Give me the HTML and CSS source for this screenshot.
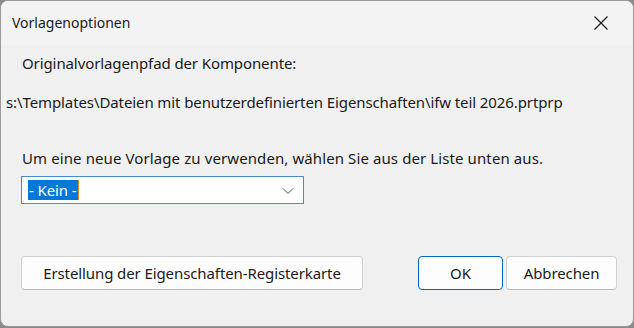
FILE: index.html
```html
<!DOCTYPE html>
<html>
<head>
    <meta charset="utf-8">
    <link rel="stylesheet" href="styles.css">
</head>
<body>
    <div class="dialog">
        <div class="title-bar">
            <span class="title">Vorlagenoptionen</span>
            <button class="close" aria-label="Schließen">
                <svg width="16" height="16" viewBox="0 0 16 16">
                    <path d="M1.5 1.5 L14.5 14.5 M14.5 1.5 L1.5 14.5" stroke="#1a1a1a" stroke-width="1.2" fill="none"/>
                </svg>
            </button>
        </div>
        <div class="content">
            <div class="label first">Originalvorlagenpfad der Komponente:</div>
            <div class="path">s:\Templates\Dateien mit benutzerdefinierten Eigenschaften\ifw teil 2026.prtprp</div>
            <div class="label choose">Um eine neue Vorlage zu verwenden, wählen Sie aus der Liste unten aus.</div>
            <div class="combo">
                <span class="selected">- Kein -</span><span class="caret"></span>
                <svg class="arrow" width="12" height="8" viewBox="0 0 12 8">
                    <path d="M1 1.5 L6 6.5 L11 1.5" stroke="#555" stroke-width="1" fill="none"/>
                </svg>
            </div>
            <div class="buttons">
                <button class="btn wide">Erstellung der Eigenschaften-Registerkarte</button>
                <div class="spacer"></div>
                <button class="btn ok">OK</button>
                <button class="btn cancel">Abbrechen</button>
            </div>
        </div>
    </div>
</body>
</html>
```

FILE: styles.css
```css
:root {
    --radius: 4px;
}

html, body {
    margin: 0;
    height: 100%;
}
body {
    background-color: #8a8a8a;
    font-family: "Noto Sans", "Open Sans", sans-serif;
    color: #1a1a1a;
}

.dialog {
    width: 632px;
    height: 325px;
    border: 1px solid #9a9a9a;
    border-radius: 8px;
    overflow: hidden;
    background-color: #f0f0f0;
    display: flex;
    flex-direction: column;
}

.title-bar {
    height: 44px;
    background-color: #f3f3f4;
    display: flex;
    align-items: center;
    padding-left: 11px;
}
.title {
    font-size: 14px;
    flex: 1;
    padding-bottom: 1px;
}
.close {
    width: 46px;
    height: 44px;
    border: none;
    background: transparent;
    display: flex;
    align-items: center;
    justify-content: center;
    margin-right: 9px;
    padding: 0;
}

.content {
    flex: 1;
    font-size: 15px;
    line-height: 20px;
    letter-spacing: -0.1px;
    padding: 0 0 0 20px;
}
.label.first {
    margin-top: 8px;
    margin-left: 1px;
}
.path {
    margin-top: 19px;
    margin-left: -15px;
}
.label.choose {
    margin-top: 36px;
    margin-left: 1px;
    letter-spacing: 0.1px;
}

.combo {
    margin-top: 8px;
    width: 275px;
    height: 26px;
    border: 1px solid #4a8ad0;
    background-color: white;
    display: flex;
    align-items: center;
    padding-left: 6px;
    box-sizing: content-box;
    position: relative;
}
.selected {
    background-color: #0078d7;
    color: white;
    padding: 0 1px;
    line-height: 20px;
}
.caret {
    width: 1px;
    height: 20px;
    background-color: #d88a2a;
}
.arrow {
    position: absolute;
    right: 9px;
    top: 10px;
}

.buttons {
    display: flex;
    margin-top: 52px;
    padding-right: 16px;
}
.spacer {
    flex: 1;
}
.btn {
    height: 34px;
    font-family: inherit;
    font-size: 15px;
    letter-spacing: -0.1px;
    color: #1a1a1a;
    background-color: #fdfdfd;
    border: 1px solid #d0d0d0;
    border-bottom-color: #b8b8b8;
    border-radius: var(--radius);
}
.btn.wide {
    width: 342px;
}
.btn.ok {
    width: 85px;
    border: 1px solid #0067c0;
    margin-right: 3px;
}
.btn.cancel {
    width: 111px;
}
```
